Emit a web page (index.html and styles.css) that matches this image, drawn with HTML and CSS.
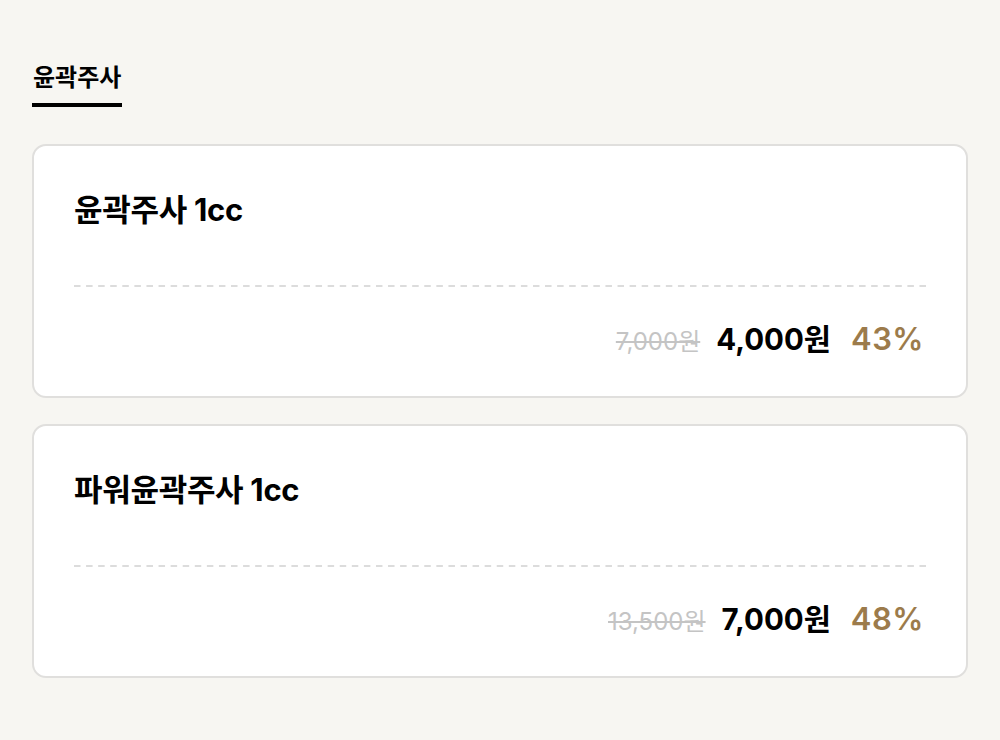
FILE: index.html
```html
<!DOCTYPE html>
<html lang="ko">
<head>
	<meta charset="utf-8">
	<title>윤곽주사</title>
	<link rel="stylesheet" href="styles.css">
</head>
<body>
	<div class="page">
		<div class="tabs">
			<span class="tab active">윤곽주사</span>
		</div>

		<div class="card">
			<h2 class="card-title">윤곽주사 1cc</h2>
			<div class="price-row">
				<span class="old-price">7,000원</span>
				<span class="price">4,000원</span>
				<span class="discount">43%</span>
			</div>
		</div>

		<div class="card">
			<h2 class="card-title">파워윤곽주사 1cc</h2>
			<div class="price-row">
				<span class="old-price">13,500원</span>
				<span class="price">7,000원</span>
				<span class="discount">48%</span>
			</div>
		</div>
	</div>
</body>
</html>
```

FILE: styles.css
```css
body {
	margin: 0;
	background-color: #f7f6f2;
	font-family: Inter, "Noto Sans CJK KR", sans-serif;
	color: #000;
}

.page {
	padding: 62px 32px 0;
}

.tabs {
	display: flex;
	margin-bottom: 37px;
}

.tab {
	font-size: 24px;
	font-weight: 700;
	line-height: 32px;
	padding: 0 1px 9px;
	border-bottom: 4px solid #000;
}

.card {
	background-color: #fff;
	border: 2px solid #e0dfdd;
	border-radius: 14px;
	padding: 40px 40px 0;
	margin-bottom: 26px;
	height: 254px;
	box-sizing: border-box;
}

.card-title {
	margin: 0;
	font-size: 31px;
	font-weight: 700;
	line-height: 48px;
	letter-spacing: -0.3px;
	background-image: linear-gradient(to right, #dcdcdc 50%, transparent 50%);
	background-size: 12.086px 2px;
	background-repeat: repeat-x;
	background-position: left bottom;
	padding-bottom: 53px;
}

.price-row {
	display: flex;
	justify-content: flex-end;
	align-items: baseline;
	line-height: 40px;
	padding: 32px 2px 0 0;
}

.old-price {
	font-size: 24px;
	color: #c4c4c4;
	text-decoration: line-through;
	margin-right: 16px;
}

.price {
	font-size: 29.5px;
	font-weight: 700;
	margin-right: 20px;
}

.discount {
	font-size: 31px;
	font-weight: 600;
	color: #9c7b4b;
	letter-spacing: 0.5px;
}
```
